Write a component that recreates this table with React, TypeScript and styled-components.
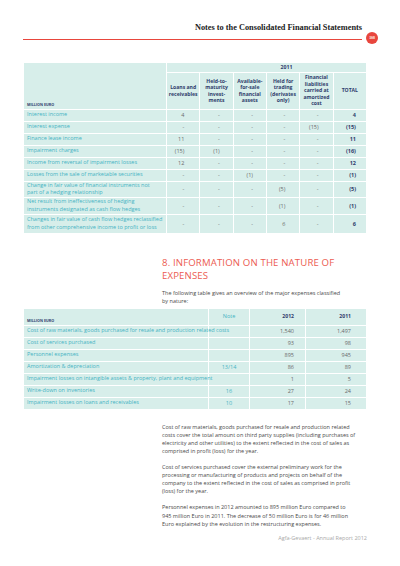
import React from "react"
import styled, { createGlobalStyle } from "styled-components"

const RED = "#e8463d"
const MINT = "#d7eeea"
const TEAL = "#45b3c3"
const NAVY = "#2f3d6c"

const GlobalStyle = createGlobalStyle`
    html, body {
        margin: 0;
        padding: 0;
        background: #fff;
    }
    body {
        width: 400px;
        height: 566px;
        overflow: hidden;
        font-family: "Open Sans", "Noto Sans", sans-serif;
    }
`

const Page = styled.div`
    width: 400px;
    box-sizing: border-box;
    padding: 23px 33px 0 23px;
`

const Header = styled.div`
    display: flex;
    margin-right: -11px;
`

const TitleBar = styled.div`
    flex: 1;
    text-align: right;
    font-family: "Liberation Serif", "Times New Roman", serif;
    font-weight: 700;
    font-size: 8.3px;
    line-height: 10px;
    color: #222;
    padding-bottom: 5.5px;
    border-bottom: 1.5px solid ${RED};
`

const Badge = styled.div`
    width: 12px;
    height: 12px;
    border-radius: 50%;
    background: ${RED};
    color: #fff;
    font-family: "Liberation Serif", serif;
    font-weight: 700;
    font-size: 3.8px;
    display: flex;
    align-items: center;
    justify-content: center;
    align-self: flex-end;
    margin: 0 0 -4px 4px;
`

const Table = styled.table<{ $top: number }>`
    width: 344px;
    margin-top: ${p => p.$top}px;
    border-collapse: collapse;
    table-layout: fixed;
    background: ${MINT};
    font-size: 5.5px;

    td, th {
        border: 1px solid #fff;
        padding: 0;
    }
`

const Row = styled.tr<{ $h: number }>`
    height: ${p => p.$h}px;
`

const UnitCell = styled.th<{ $w?: number }>`
    width: ${p => (p.$w ? `${p.$w}px` : "auto")};
    text-align: left;
    vertical-align: bottom;
    padding: 0 0 2px 3px !important;
    font-size: 3.7px;
    font-weight: 700;
    color: ${NAVY};
    text-transform: uppercase;
`

const YearBand = styled.th`
    font-size: 5.2px;
    font-weight: 700;
    color: ${NAVY};
    text-align: center;
    padding-left: 40px !important;
`

const HeadCell = styled.th<{ $w: number; $align?: string; $pr?: number; $light?: boolean }>`
    width: ${p => p.$w}px;
    font-size: ${p => (p.$light ? 5.5 : 5.1)}px;
    line-height: 6.5px;
    font-weight: ${p => (p.$light ? 400 : 700)};
    color: ${p => (p.$light ? TEAL : NAVY)};
    text-align: ${p => p.$align || "center"};
    padding-right: ${p => p.$pr || 0}px !important;
    vertical-align: middle;
`

const Label = styled.td`
    color: ${TEAL};
    line-height: 7.4px;
    padding-left: 3px !important;
    white-space: nowrap;
`

const Num = styled.td<{ $pr: number; $bold?: boolean; $align?: string; $teal?: boolean }>`
    text-align: ${p => p.$align || "right"};
    padding-right: ${p => p.$pr}px !important;
    color: ${p => (p.$bold ? NAVY : p.$teal ? TEAL : "#6a6a6a")};
    font-weight: ${p => (p.$bold ? 700 : 400)};
`

const Indented = styled.div`
    margin-left: 139px;
`

const SectionTitle = styled.h2`
    margin: 22px 0 0;
    font-size: 9.6px;
    letter-spacing: 0.15px;
    line-height: 13px;
    font-weight: 400;
    color: #ec5b51;
`

const Text = styled.p<{ $top: number }>`
    margin: ${p => p.$top}px 0 0;
    font-size: 5.5px;
    line-height: 8.1px;
    color: #4a4a4a;
`

const Footer = styled.div`
    margin-top: 6px;
    text-align: right;
    font-size: 5.5px;
    line-height: 8px;
    color: #a8a8a8;
`

type Line = { label: string[]; cells: string[]; total: string; h: number }

const incomeRows: Line[] = [
    { label: ["Interest income"], cells: ["4", "-", "-", "-", "-"], total: "4", h: 12 },
    { label: ["Interest expense"], cells: ["-", "-", "-", "-", "(15)"], total: "(15)", h: 12 },
    { label: ["Finance lease income"], cells: ["11", "-", "-", "-", "-"], total: "11", h: 12 },
    { label: ["Impairment charges"], cells: ["(15)", "(1)", "-", "-", "-"], total: "(16)", h: 12 },
    { label: ["Income from reversal of impairment losses"], cells: ["12", "-", "-", "-", "-"], total: "12", h: 12 },
    { label: ["Losses from the sale of marketable securities"], cells: ["-", "-", "(1)", "-", "-"], total: "(1)", h: 12 },
    {
        label: ["Change in fair value of financial instruments not", "part of a hedging relationship"],
        cells: ["-", "-", "-", "(5)", "-"], total: "(5)", h: 16,
    },
    {
        label: ["Net result from ineffectiveness of hedging", "instruments designated as cash flow hedges"],
        cells: ["-", "-", "-", "(1)", "-"], total: "(1)", h: 17,
    },
    {
        label: ["Changes in fair value of cash flow hedges reclassified", "from other comprehensive income to profit or loss"],
        cells: ["-", "-", "-", "6", "-"], total: "6", h: 19,
    },
]

const cellPad = [15, 13, 13, 14, 14]

const expenseRows = [
    ["Cost of raw materials, goods purchased for resale and production related costs", "", "1,540", "1,497"],
    ["Cost of services purchased", "", "93", "98"],
    ["Personnel expenses", "", "895", "945"],
    ["Amortization & depreciation", "13/14", "86", "89"],
    ["Impairment losses on intangible assets & property, plant and equipment", "", "1", "5"],
    ["Write-down on inventories", "16", "27", "24"],
    ["Impairment losses on loans and receivables", "10", "17", "15"],
]

const split = (s: string) =>
    s.split("|").map((part, i) => (
        <React.Fragment key={i}>
            {i > 0 && <br />}
            {part}
        </React.Fragment>
    ))

export default function App() {
    return (
        <>
            <GlobalStyle />
            <Page>
                <Header>
                    <TitleBar>Notes to the Consolidated Financial Statements</TitleBar>
                    <Badge>108</Badge>
                </Header>

                <Table $top={22}>
                    <thead>
                        <Row $h={10}>
                            <UnitCell rowSpan={2} $w={139}>Million Euro</UnitCell>
                            <YearBand colSpan={6}>2011</YearBand>
                        </Row>
                        <Row $h={37}>
                            <HeadCell $w={37}>{split("Loans and|receivables")}</HeadCell>
                            <HeadCell $w={33}>{split("Held-to-|maturity|invest-|ments")}</HeadCell>
                            <HeadCell $w={34}>{split("Available-|for-sale|financial|assets")}</HeadCell>
                            <HeadCell $w={35}>{split("Held for|trading|(derivates|only)")}</HeadCell>
                            <HeadCell $w={34}>{split("Financial|liabilities|carried at|amortized|cost")}</HeadCell>
                            <HeadCell $w={32}>TOTAL</HeadCell>
                        </Row>
                    </thead>
                    <tbody>
                        {incomeRows.map(r => (
                            <Row $h={r.h} key={r.label[0]}>
                                <Label>{split(r.label.join("|"))}</Label>
                                {r.cells.map((c, i) => (
                                    <Num $pr={cellPad[i]} key={i}>{c}</Num>
                                ))}
                                <Num $pr={10} $bold>{r.total}</Num>
                            </Row>
                        ))}
                    </tbody>
                </Table>

                <Indented>
                    <SectionTitle>
                        8. INFORMATION ON THE NATURE OF
                        <br />
                        EXPENSES
                    </SectionTitle>
                    <Text $top={7}>
                        The following table gives an overview of the major expenses classified
                        <br />
                        by nature:
                    </Text>
                </Indented>

                <Table $top={3}>
                    <thead>
                        <Row $h={17}>
                            <UnitCell>Million Euro</UnitCell>
                            <HeadCell $w={40} $light>Note</HeadCell>
                            <HeadCell $w={44} $align="right" $pr={11}>2012</HeadCell>
                            <HeadCell $w={45} $align="right" $pr={15}>2011</HeadCell>
                        </Row>
                    </thead>
                    <tbody>
                        {expenseRows.map(r => (
                            <Row $h={12} key={r[0]}>
                                <Label>{r[0]}</Label>
                                <Num $pr={0} $align="center" $teal>{r[1]}</Num>
                                <Num $pr={11}>{r[2]}</Num>
                                <Num $pr={15}>{r[3]}</Num>
                            </Row>
                        ))}
                    </tbody>
                </Table>

                <Indented>
                    <Text $top={13}>
                        Cost of raw materials, goods purchased for resale and production related
                        <br />
                        costs cover the total amount on third party supplies (including purchases of
                        <br />
                        electricity and other utilities) to the extent reflected in the cost of sales as
                        <br />
                        comprised in profit (loss) for the year.
                    </Text>
                    <Text $top={8}>
                        Cost of services purchased cover the external preliminary work for the
                        <br />
                        processing or manufacturing of products and projects on behalf of the
                        <br />
                        company to the extent reflected in the cost of sales as comprised in profit
                        <br />
                        (loss) for the year.
                    </Text>
                    <Text $top={8}>
                        Personnel expenses in 2012 amounted to 895 million Euro compared to
                        <br />
                        945 million Euro in 2011. The decrease of 50 million Euro is for 46 million
                        <br />
                        Euro explained by the evolution in the restructuring expenses.
                    </Text>
                    <Footer>Agfa-Gevaert - Annual Report 2012</Footer>
                </Indented>
            </Page>
        </>
    )
}
